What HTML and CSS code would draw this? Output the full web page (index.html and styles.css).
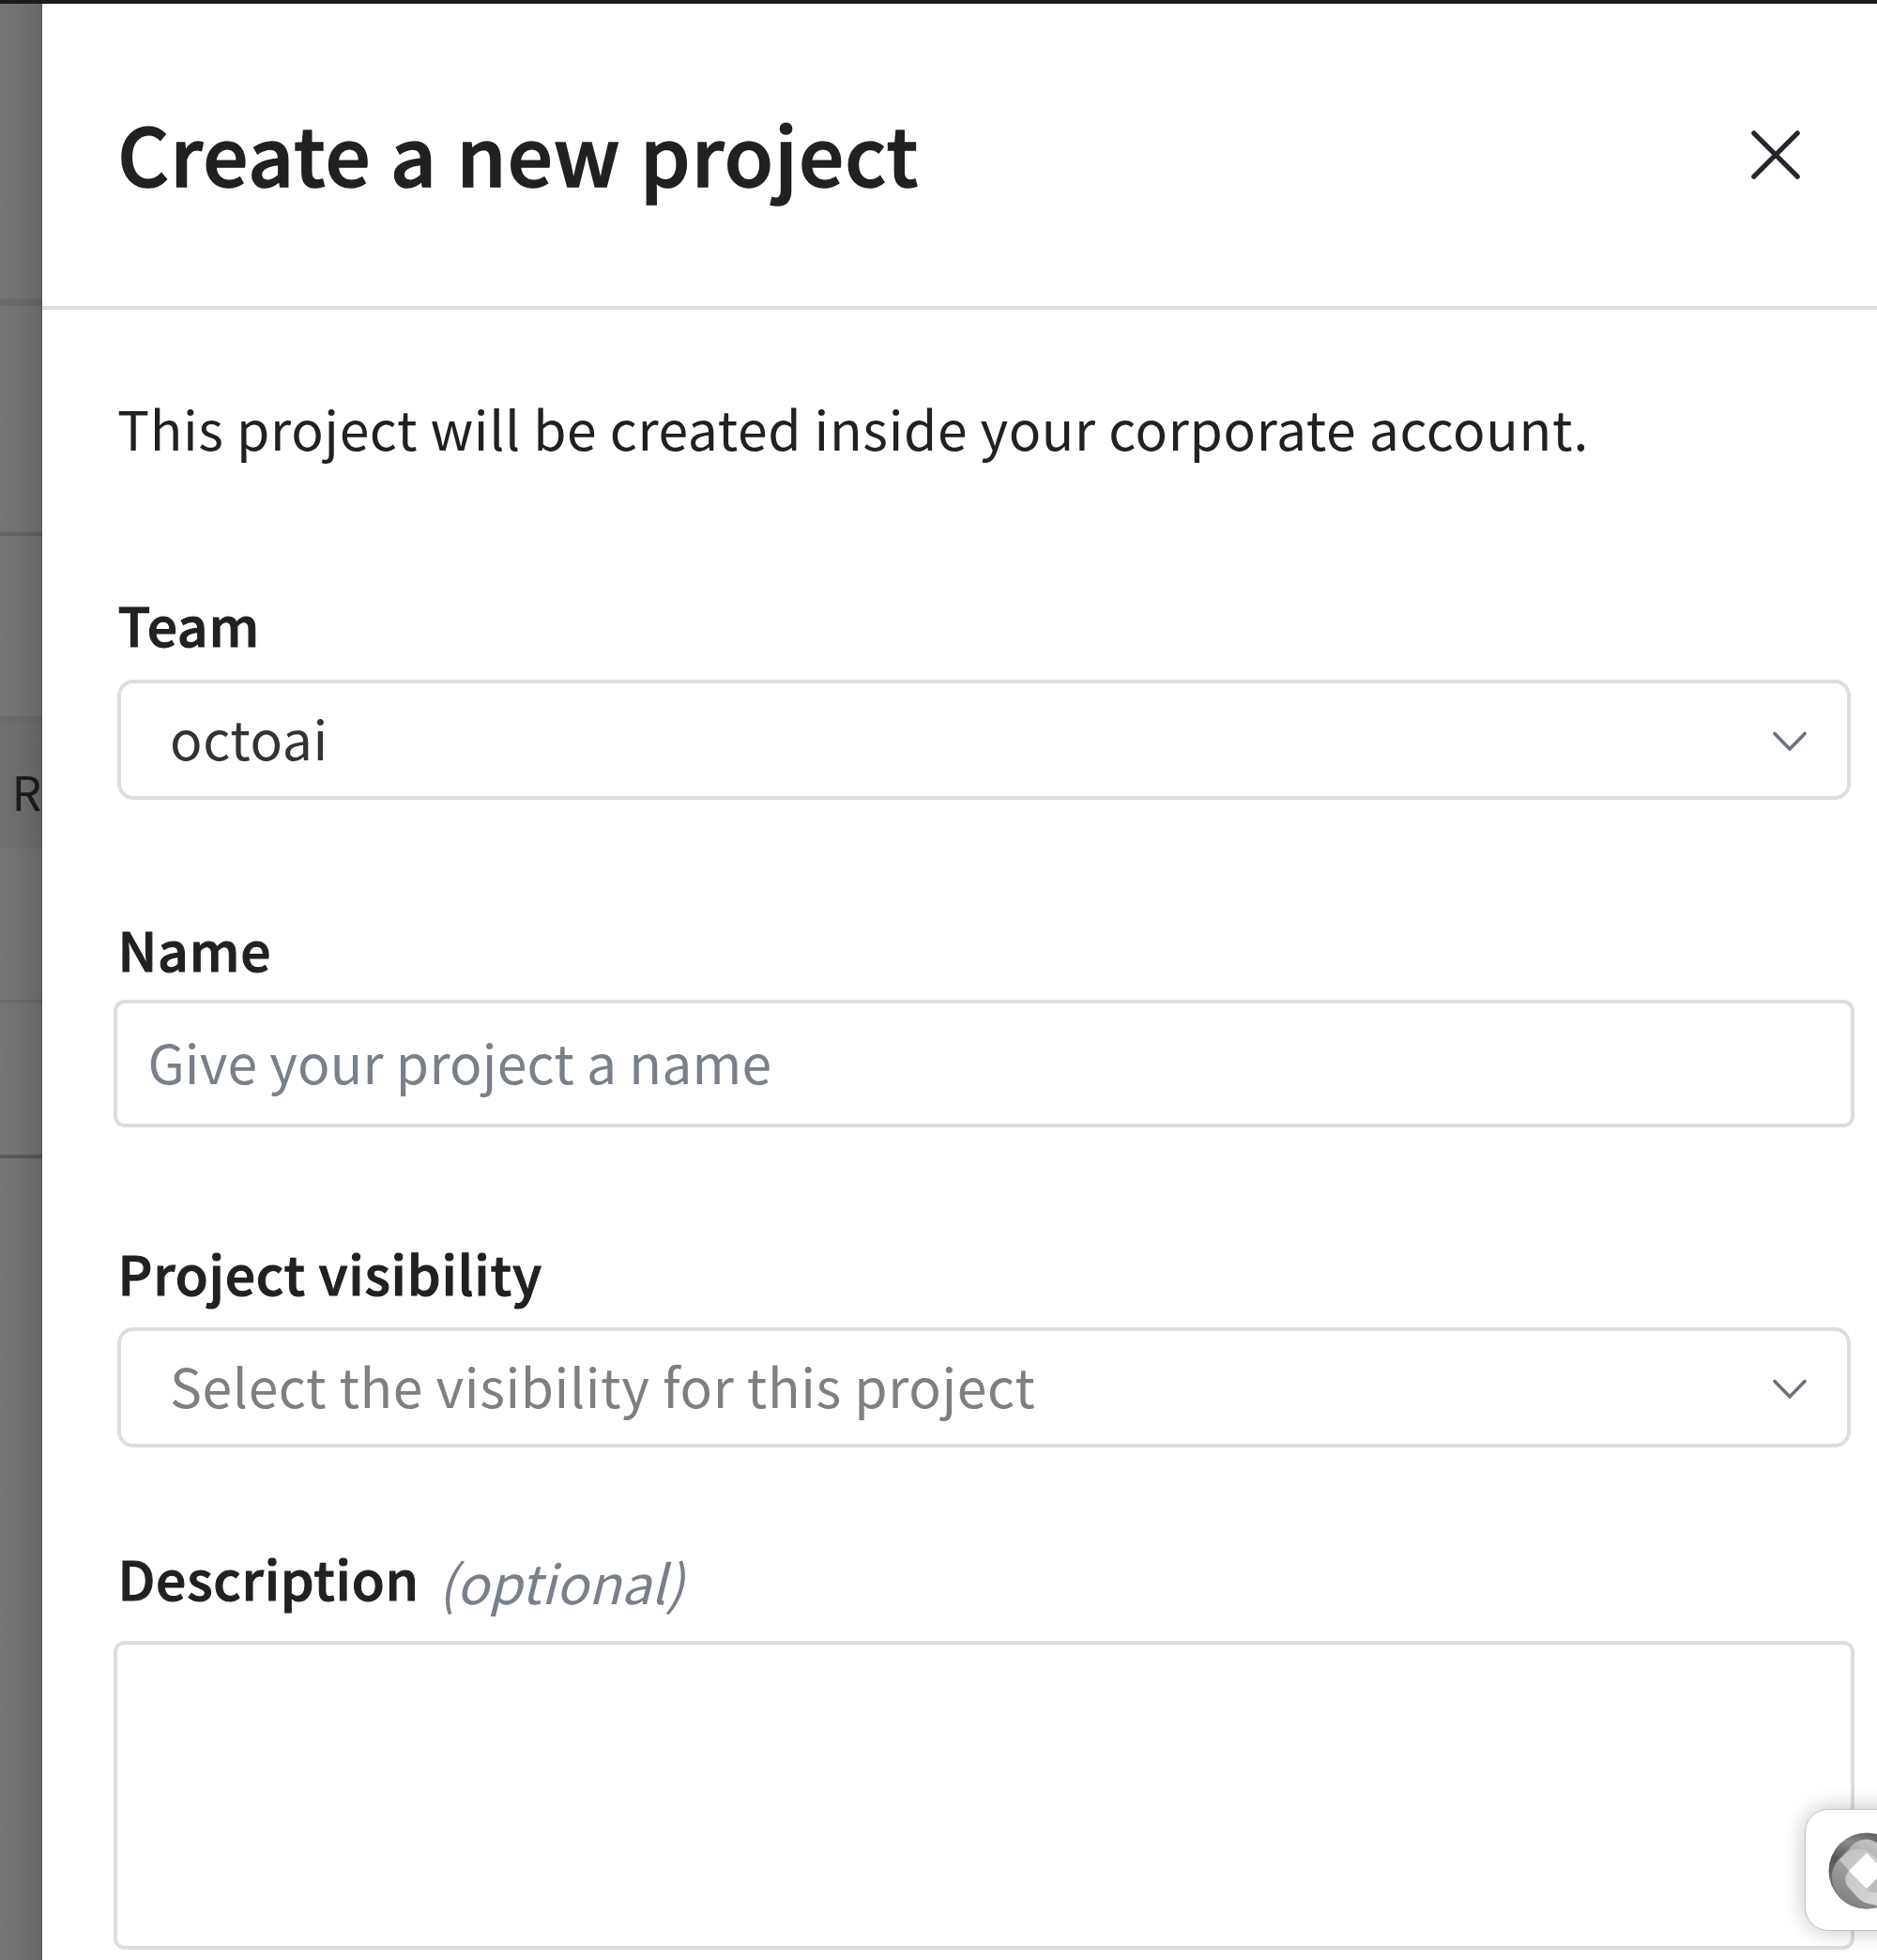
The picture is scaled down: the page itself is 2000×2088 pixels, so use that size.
FILE: index.html
```html
<!DOCTYPE html>
<html lang="en">
<head>
<meta charset="utf-8">
<title>Create a new project</title>
<link rel="stylesheet" href="styles.css">
</head>
<body>
<div class="topbar"></div>
<div class="layout">
  <aside class="backdrop">
    <div class="row row-a"></div>
    <div class="row row-b"></div>
    <div class="row row-c"></div>
    <div class="row row-d">R</div>
    <div class="row row-e"></div>
    <div class="row row-f"></div>
    <div class="shade"></div>
  </aside>
  <main class="drawer">
    <header class="drawer-header">
      <h1 class="title">Create a new project</h1>
      <button class="close" aria-label="Close">
        <svg viewBox="0 0 52 52" width="52" height="52"><path d="M2.8 2.8L49.2 49.2M49.2 2.8L2.8 49.2"/></svg>
      </button>
    </header>
    <form class="form">
      <p class="intro">This project will be created inside your corporate account.</p>
      <label class="label label-team">Team</label>
      <div class="select">
        <span class="value">octoai</span>
        <svg class="chevron" viewBox="0 0 36 22" width="36" height="22"><path d="M2 2.5L18 19L34 2.5"/></svg>
      </div>
      <label class="label label-name">Name</label>
      <div class="input"><span class="placeholder">Give your project a name</span></div>
      <label class="label label-visibility">Project visibility</label>
      <div class="select">
        <span class="value empty">Select the visibility for this project</span>
        <svg class="chevron" viewBox="0 0 36 22" width="36" height="22"><path d="M2 2.5L18 19L34 2.5"/></svg>
      </div>
      <label class="label label-description">Description<span class="optional">(optional)</span></label>
      <div class="textarea"></div>
    </form>
  </main>
</div>
<div class="widget">
  <svg viewBox="0 0 82 82" width="82" height="82">
    <defs>
      <linearGradient id="ring" x1="0.6" y1="0" x2="0.3" y2="1"><stop offset="0" stop-color="#5c5c5c"/><stop offset="0.2" stop-color="#8a8a8a"/><stop offset="0.45" stop-color="#565656"/><stop offset="1" stop-color="#828282"/></linearGradient>
      <linearGradient id="band" x1="0.8" y1="0" x2="0.2" y2="1"><stop offset="0" stop-color="#cecece"/><stop offset="0.45" stop-color="#a6a6a6"/><stop offset="1" stop-color="#7c7c7c"/></linearGradient>
      <linearGradient id="core" x1="0" y1="0" x2="1" y2="1"><stop offset="0" stop-color="#c0c0c0"/><stop offset="1" stop-color="#dadada"/></linearGradient>
      <clipPath id="disc"><circle cx="41" cy="41" r="40.5"/></clipPath>
    </defs>
    <g clip-path="url(#disc)">
      <rect width="82" height="82" fill="url(#ring)"/>
      <path d="M4 45C5 37 8 32 12 28L22 18C30 7 44 3 55 14L82 42V82H30C14 76 4 62 4 45Z" fill="url(#band)"/>
      <path d="M12 29L21 21C27 16 38 17 45 22L66 40L60 78C46 78 37 75 32 70L22 59C16 52 18 46 22 41Z" fill="url(#core)"/>
      <path d="M39 59L60 40V64H49C44 64 41 62 39 59Z" fill="#bdbdbd"/>
      <path d="M41 22L60 41L41 60L22 41Z" fill="#fff"/>
    </g>
  </svg>
</div>
</body>
</html>
```
FILE: styles.css
```css
* { box-sizing: border-box; }

body {
  margin: 0;
  width: 2000px;
  height: 2088px;
  overflow: hidden;
  position: relative;
  background: #fff;
  color: #212121;
  font-family: "Noto Sans CJK SC", "Noto Sans", sans-serif;
  font-size: 57px;
  letter-spacing: 0.64px;
}

.topbar { height: 4px; background: #1a1c1f; }

.layout { display: flex; height: 2084px; }

.backdrop {
  position: relative;
  width: 44.6px;
  flex: none;
  background: #767676;
  overflow: hidden;
}
.row { border-bottom: 3px solid #646464; }
.row-a { height: 322px; border-bottom: 8px solid #6b6c6e; }
.row-b { height: 245px; border-bottom-width: 4px; }
.row-c { height: 200px; border-bottom: 8px solid #6b6e71; }
.row-d {
  height: 133px;
  border: 0;
  background: #717171;
  padding-left: 12.5px;
  font-size: 50px;
  line-height: 142px;
  color: #1a1c1f;
}
.row-e { height: 164px; border-bottom-color: #6d6d6d; }
.row-f { height: 166px; border-bottom: 4px solid #5c5c5c; }
.shade {
  position: absolute;
  inset: 0;
  background: linear-gradient(to right, rgba(0,0,0,0), rgba(0,0,0,0.05) 50%, rgba(0,0,0,0.14) 94%, rgba(0,0,0,0.24));
}

.drawer { flex: 1; background: #fff; }

.drawer-header {
  height: 326px;
  padding: 0 82px 0 80.6px;
  display: flex;
  justify-content: space-between;
  align-items: flex-start;
  border-bottom: 4px solid #dadce1;
}
.title {
  margin: 98px 0 0;
  font-size: 85px;
  line-height: 120px;
  font-weight: 500;
  -webkit-text-stroke: 1.6px currentColor;
  letter-spacing: 1.2px;
}
.close {
  margin: 135px 0 0;
  padding: 0;
  border: 0;
  background: none;
  width: 52px;
  height: 52px;
}
.close svg { display: block; fill: none; stroke: #24282e; stroke-width: 5.2; stroke-linecap: round; }

.form { padding: 85px 24px 0 76.4px; }
.intro { margin: 0 0 129px 4px; line-height: 80px; }

.label {
  display: flex;
  margin-left: 4.5px;
  height: 80px;
  line-height: 80px;
  font-weight: 500;
  letter-spacing: 0.78px;
  -webkit-text-stroke: 1.1px currentColor;
}
.select {
  height: 128px;
  margin: 0 4px;
  padding: 0 43px 0 52px;
  display: flex;
  align-items: center;
  justify-content: space-between;
  border: 4px solid #dadde2;
  border-radius: 17px;
}
.value { color: #333; line-height: 80px; padding-bottom: 6px; }
.empty { color: #7f7f7f; }
.chevron { margin-top: 3px; fill: none; stroke: #6b727c; stroke-width: 3.6; stroke-linecap: round; }

.input {
  height: 136px;
  padding-left: 32.4px;
  display: flex;
  align-items: center;
  border: 4px solid #dadde2;
  border-radius: 12px;
}
.placeholder { color: #79808a; line-height: 80px; padding-bottom: 6px; letter-spacing: 0.22px; }
.textarea { height: 329px; border: 4px solid #dadde2; border-radius: 12px; }

.label-team { margin-bottom: 20px; }
.label-name { margin-top: 118px; margin-bottom: 15px; }
.label-visibility { margin-top: 114px; margin-bottom: 19px; }
.label-description { margin-top: 98px; margin-bottom: 28px; }
.optional {
  margin: 4px 0 0 20px;
  font-weight: 400;
  font-style: italic;
  color: #79808a;
  letter-spacing: 0;
  -webkit-text-stroke: 0;
}

.widget {
  position: absolute;
  left: 1923px;
  top: 1927px;
  width: 130px;
  height: 130px;
  padding: 24px 0 0 24px;
  background: #fff;
  border: 1px solid #c0c0c0;
  border-radius: 25px;
  box-shadow: 0 0 24px rgba(0,0,0,0.24);
}
.widget svg { display: block; }
```
